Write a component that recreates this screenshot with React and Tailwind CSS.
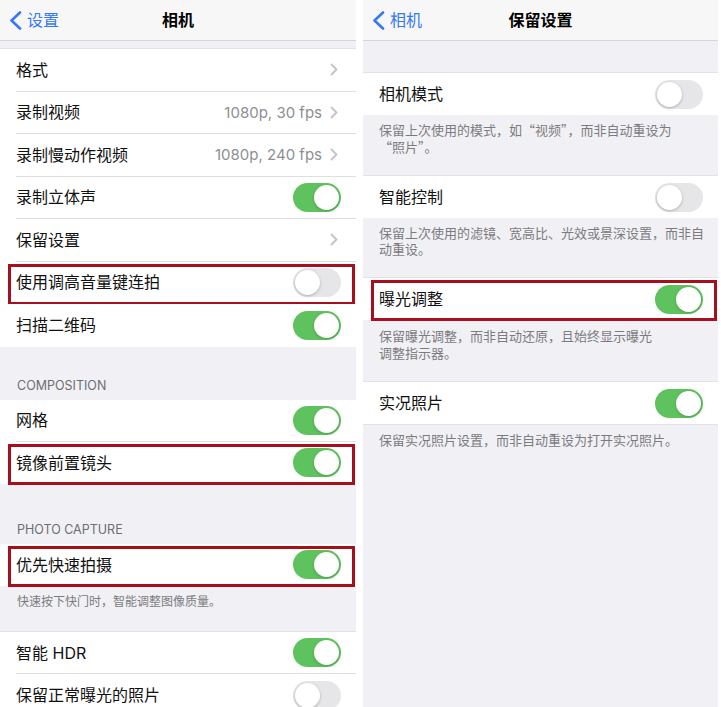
import React from "react";

const FONT = "font-['Inter','Noto_Sans_CJK_SC',sans-serif]";

function Toggle({ on }) {
  if (on) {
    return (
      <div className="w-[48px] h-[29px] rounded-full bg-[#5ec35e] p-[2px] flex justify-end shrink-0">
        <div className="w-[25px] h-[25px] rounded-full bg-white shadow-[0_1px_3px_rgba(0,0,0,0.2)]" />
      </div>
    );
  }
  return (
    <div className="w-[48px] h-[29px] rounded-full bg-[#e6e6e9] p-[2px] flex shrink-0">
      <div className="w-[25px] h-[25px] rounded-full bg-white shadow-[0_1px_3px_rgba(0,0,0,0.25)]" />
    </div>
  );
}

function Chevron() {
  return (
    <svg width="8" height="13" viewBox="0 0 8 13" className="shrink-0 ml-[8px] mr-[3px]">
      <polyline points="1.5,1.5 6.5,6.5 1.5,11.5" fill="none" stroke="#c4c4c8" strokeWidth="1.8" strokeLinecap="round" strokeLinejoin="round" />
    </svg>
  );
}

function Row({ label, right, last, boxed, detail, h }) {
  return (
    <div className={`relative shrink-0 bg-white pl-[16px] ${h === "b" ? "h-[42px]" : "h-[42.5px]"}`}>
      <div className={last ? "h-full flex items-center pr-[15px]" : "h-full flex items-center pr-[15px] border-b border-[#dedee2]"}>
        <span className="flex-1 text-[16px] leading-none text-[#111]">{label}</span>
        {detail && <span className="text-[15px] text-[#8e8e93] leading-none">{detail}</span>}
        {right === "on" && <Toggle on />}
        {right === "off" && <Toggle on={false} />}
        {right === "chev" && <Chevron />}
      </div>
      {boxed && (
        <div className="absolute left-[8px] right-[1px] top-[2px] bottom-[-1px] border-[3px] border-[#a80f1d]" />
      )}
    </div>
  );
}

function Nav({ back, title }) {
  return (
    <div className="h-[41px] shrink-0 bg-[#f7f7f7] border-b border-[#d6d6da] relative flex items-center">
      <div className="flex items-center pl-[9px] text-[#3478f6]">
        <svg width="13" height="19" viewBox="0 0 13 19">
          <polyline points="11,1.5 2.5,9.5 11,17.5" fill="none" stroke="#3478f6" strokeWidth="2.6" strokeLinecap="round" strokeLinejoin="round" />
        </svg>
        <span className="ml-[5px] text-[16px] leading-none">{back}</span>
      </div>
      <div className="absolute inset-0 flex items-center justify-center pointer-events-none">
        <span className="text-[16px] font-semibold leading-none text-black">{title}</span>
      </div>
    </div>
  );
}

const Q = ({ children }) => <span className="font-['Noto_Sans_CJK_SC',sans-serif]">{children}</span>;

export default function App() {
  return (
    <div className={`w-[721px] h-[707px] bg-white flex gap-[7px] overflow-hidden ${FONT}`}>
      {/* Left panel */}
      <div className="w-[356px] h-full bg-[#f1f1f5] flex flex-col overflow-hidden">
        <Nav back="设置" title="相机" />
        <div className="h-[7px] shrink-0" />
        <div className="shrink-0 border-t border-[#e2e2e6]">
          <Row label="格式" right="chev" />
          <Row label="录制视频" detail="1080p, 30 fps" right="chev" />
          <Row label="录制慢动作视频" detail="1080p, 240 fps" right="chev" />
          <Row label="录制立体声" right="on" />
          <Row label="保留设置" right="chev" />
          <Row label="使用调高音量键连拍" right="off" boxed />
          <Row label="扫描二维码" right="on" last />
        </div>
        <div className="h-[53px] shrink-0 flex items-end pl-[17px] pb-[7px] text-[12.5px] leading-[15px] text-[#6d6d72]">
          COMPOSITION
        </div>
        <div className="shrink-0">
          <Row label="网格" right="on" h="b" />
          <Row label="镜像前置镜头" right="on" boxed last h="b" />
        </div>
        <div className="h-[60px] shrink-0 flex items-end pl-[17px] pb-[7px] text-[12.5px] leading-[15px] text-[#6d6d72]">
          PHOTO CAPTURE
        </div>
        <div className="shrink-0">
          <Row label="优先快速拍摄" right="on" boxed last />
        </div>
        <div className="h-[45px] shrink-0 pl-[17px] pt-[8px] text-[12px] leading-[16px] text-[#7b7b80]">
          快速按下快门时，智能调整图像质量。
        </div>
        <div className="shrink-0 border-t border-[#e2e2e6]">
          <Row label="智能 HDR" right="on" h="b" />
          <Row label="保留正常曝光的照片" right="off" last h="b" />
        </div>
      </div>

      {/* Right panel */}
      <div className="w-[355px] h-full bg-[#f1f1f5] flex flex-col overflow-hidden">
        <Nav back="相机" title="保留设置" />
        <div className="h-[32px] shrink-0 border-b border-[#e2e2e6]" />
        <Row label="相机模式" right="off" last h="b" />
        <div className="h-[61px] shrink-0 pl-[16px] pt-[7px] text-[13px] leading-[16.5px] text-[#7b7b80] border-b border-[#e2e2e6]">
          保留上次使用的模式，如<Q>“</Q>视频<Q>”</Q>，而非自动重设为
          <br />
          <Q>“</Q>照片<Q>”</Q>。
        </div>
        <Row label="智能控制" right="off" last h="b" />
        <div className="h-[60px] shrink-0 pl-[16px] pt-[7px] text-[13px] leading-[16px] text-[#7b7b80] border-b border-[#e2e2e6]">
          保留上次使用的滤镜、宽高比、光效或景深设置，而非自
          <br />
          动重设。
        </div>
        <Row label="曝光调整" right="on" last boxed h="b" />
        <div className="h-[62px] shrink-0 pl-[16px] pt-[8px] text-[13px] leading-[16.5px] text-[#7b7b80] border-b border-[#e2e2e6]">
          保留曝光调整，而非自动还原，且始终显示曝光
          <br />
          调整指示器。
        </div>
        <Row label="实况照片" right="on" last h="b" />
        <div className="pl-[16px] pt-[7px] text-[13px] leading-[16.5px] text-[#7b7b80] border-t border-[#e2e2e6]">
          保留实况照片设置，而非自动重设为打开实况照片。
        </div>
      </div>
    </div>
  );
}
